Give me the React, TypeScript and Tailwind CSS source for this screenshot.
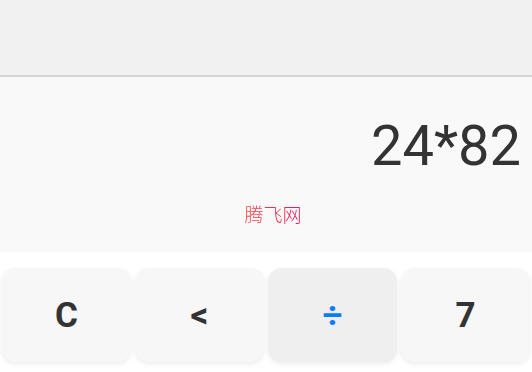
import React from "react";

const keys: { label: string; accent?: boolean }[] = [
  { label: "C" },
  { label: "<" },
  { label: "÷", accent: true },
  { label: "7" },
];

export default function App() {
  return (
    <div className="w-[532px] h-[372px] overflow-hidden bg-white font-['Roboto',sans-serif]">
      {/* title bar */}
      <div className="h-[77px] bg-[#f1f1f1] border-b-2 border-[#d6d6d6]" />

      {/* display */}
      <div className="h-[175px] bg-[#f9f9f9] flex flex-col">
        <div className="pt-[36px] pr-[11px] text-right text-[56px] leading-[66px] text-[#333333]">
          24*82
        </div>
        <div className="mt-[23px] pl-[14px] text-center">
          <span className="text-[19px] leading-[24px] font-['Noto_Sans_CJK_SC',sans-serif] font-light bg-gradient-to-r from-[#f5403c] to-[#e6155a] bg-clip-text text-transparent">
            腾飞网
          </span>
        </div>
      </div>

      {/* keypad row */}
      <div className="grid grid-cols-4 pt-[16px]">
        {keys.map((k) => (
          <div key={k.label} className="px-[2px]">
            <div
              className={
                "h-[94px] rounded-[14px] flex items-center justify-center shadow-[0_2px_5px_rgba(0,0,0,0.08)] " +
                (k.accent ? "bg-[#efefef]" : "bg-[#f7f7f7]")
              }
            >
              <span
                className={
                  "text-[35px] font-bold leading-none " +
                  (k.accent ? "text-[#0a7cff]" : "text-[#333333]")
                }
              >
                {k.label}
              </span>
            </div>
          </div>
        ))}
      </div>
    </div>
  );
}
